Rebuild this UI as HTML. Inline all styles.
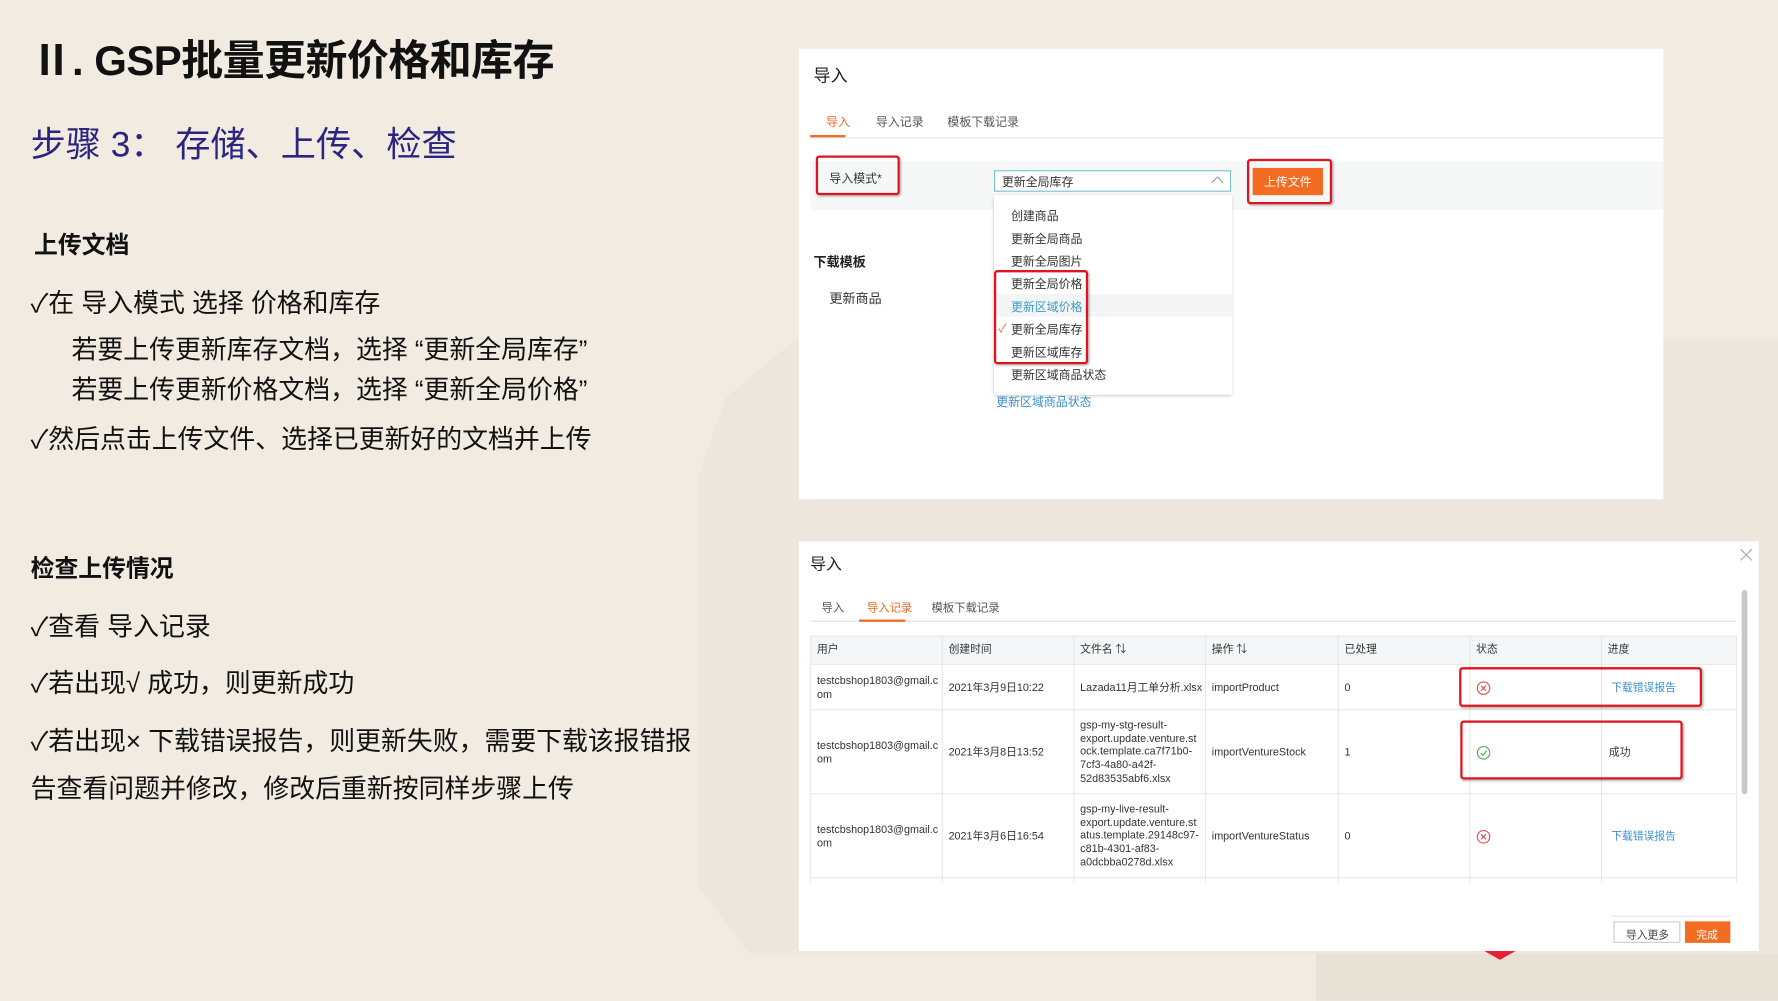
<!DOCTYPE html>
<html><head><meta charset="utf-8">
<style>
html,body{margin:0;padding:0;width:1778px;height:1000px;overflow:hidden;background:#f1ebe1}
#w{position:absolute;left:0;top:0;width:1567px;height:882px;transform:scale(1.13465);transform-origin:0 0;font-family:"Liberation Sans","Noto Sans CJK SC",sans-serif;color:#111}
.a{position:absolute;white-space:nowrap}
.t{font-size:22.8px;color:#111}
.p{background:#fff;position:absolute}
.s{font-size:10.5px;color:#333}
.rb{position:absolute;border:2.5px solid #e0141e;border-radius:3px;box-shadow:1px 1px 2px rgba(0,0,0,.3)}
.c{position:absolute;font-size:9.5px;color:#333;line-height:11.7px}
.vl{position:absolute;width:1px;background:#e8e8e8}
.hl{position:absolute;height:1px;background:#e8e8e8}
</style></head><body>
<div id="w">
<svg class="a" style="left:0;top:0" width="1567" height="882">
<polygon points="615,420 640,350 700,300 1567,300 1567,882 1160,882 1160,840 660,840 615,780" fill="#ede6dc"/>
<polygon points="1160,840 1567,840 1567,882 1160,882" fill="#e8e1d6"/>
<polygon points="1308,838 1336,838 1322,846" fill="#e8213a"/>
</svg>
<div class="a" style="left:27px;top:23px;font-size:37px;font-weight:bold;letter-spacing:-0.5px">Ⅱ. GSP批量更新价格和库存</div>
<div class="a" style="left:27px;top:102px;font-size:31px;color:#2b2580">步骤 3： 存储、上传、检查</div>
<div class="a" style="left:30px;top:200px;font-size:21px;font-weight:bold">上传文档</div>
<div class="a t" style="left:27px;top:249px">✓在 导入模式 选择 价格和库存</div>
<div class="a t" style="left:63px;top:290px">若要上传更新库存文档，选择 “更新全局库存”</div>
<div class="a t" style="left:63px;top:325px">若要上传更新价格文档，选择 “更新全局价格”</div>
<div class="a t" style="left:27px;top:369px">✓然后点击上传文件、选择已更新好的文档并上传</div>
<div class="a" style="left:27px;top:485px;font-size:21px;font-weight:bold">检查上传情况</div>
<div class="a t" style="left:27px;top:534px">✓查看 导入记录</div>
<div class="a t" style="left:27px;top:584px">✓若出现√ 成功，则更新成功</div>
<div class="a t" style="left:27px;top:635px">✓若出现× 下载错误报告，则更新失败，需要下载该报错报</div>
<div class="a t" style="left:27px;top:677px">告查看问题并修改，修改后重新按同样步骤上传</div>

<!-- panel 1 -->
<div class="p" style="left:704px;top:43px;width:762px;height:397px">
<div class="a" style="left:13px;top:13px;font-size:15px;color:#222">导入</div>
<div class="a s" style="left:24px;top:57px;color:#f06a24">导入</div>
<div class="a s" style="left:68px;top:57px;color:#555">导入记录</div>
<div class="a s" style="left:131px;top:57px;color:#555">模板下载记录</div>
<div class="hl" style="left:10px;top:78px;width:752px;background:#e4e4e4"></div>
<div class="a" style="left:10px;top:76px;width:31px;height:2px;background:#f06a24"></div>
<div class="a" style="left:10px;top:99px;width:752px;height:43px;background:#f6f8f8"></div>
<div class="a s" style="left:27px;top:107px">导入模式*</div>
<div class="a" style="left:172px;top:107px;width:207px;height:17px;border:1px solid #7cc0d4;background:#fff"><span class="a s" style="left:6px;top:2px">更新全局库存</span><svg class="a" style="left:190px;top:3px" width="12" height="8"><path d="M1 7 L6 2 L11 7" stroke="#999" fill="none"/></svg></div>
<div class="a" style="left:400px;top:105px;width:62px;height:24px;background:#f26c22"><span class="a" style="left:10px;top:5px;font-size:10.5px;color:#fff">上传文件</span></div>
<div class="a" style="left:172px;top:129px;width:210px;height:176px;background:#fff;box-shadow:0 1px 3px rgba(0,0,0,.25)"></div>
<div class="a" style="left:172px;top:216px;width:210px;height:20px;background:#f3f5f7"></div>
<div class="a s" style="left:187px;top:140px">创建商品</div>
<div class="a s" style="left:187px;top:160px">更新全局商品</div>
<div class="a s" style="left:187px;top:180px">更新全局图片</div>
<div class="a s" style="left:187px;top:200px">更新全局价格</div>
<div class="a s" style="left:187px;top:220px;color:#3a9fc4">更新区域价格</div>
<div class="a s" style="left:176px;top:239px;color:#f06a24">✓</div>
<div class="a s" style="left:187px;top:240px">更新全局库存</div>
<div class="a s" style="left:187px;top:260px">更新区域库存</div>
<div class="a s" style="left:187px;top:280px">更新区域商品状态</div>
<div class="a s" style="left:174px;top:304px;color:#3a8fd0">更新区域商品状态</div>
<div class="a" style="left:13px;top:180px;font-size:11.5px;font-weight:bold;color:#222">下载模板</div>
<div class="a" style="left:27px;top:212px;font-size:11.5px;color:#333">更新商品</div>
</div>
<div class="rb" style="left:719px;top:137px;width:70px;height:31px"></div>
<div class="rb" style="left:1099px;top:140px;width:71px;height:36px"></div>
<div class="rb" style="left:876px;top:238px;width:79px;height:79px"></div>

<!-- panel 2 -->
<div class="p" style="left:704px;top:477px;width:846px;height:361px">
<div class="a" style="left:10px;top:10px;font-size:14px;color:#222">导入</div>
<svg class="a" style="left:829px;top:6px" width="12" height="12"><path d="M1 1L11 11M11 1L1 11" stroke="#aaa" stroke-width="1"/></svg>
<div class="a" style="left:20px;top:50px;font-size:10px;color:#555">导入</div>
<div class="a" style="left:60px;top:50px;font-size:10px;color:#f06a24">导入记录</div>
<div class="a" style="left:117px;top:50px;font-size:10px;color:#555">模板下载记录</div>
<div class="hl" style="left:10px;top:70px;width:816px;background:#e2e2e2"></div>
<div class="a" style="left:53px;top:69px;width:41px;height:2px;background:#f06a24"></div>
<div class="a" style="left:831px;top:43px;width:5px;height:180px;background:#c8c8c8;border-radius:3px"></div>
<div class="a" style="left:10px;top:83px;width:816px;height:25px;background:#f5f6f7"></div>
<div class="hl" style="left:10px;top:83px;width:816px"></div>
<div class="hl" style="left:10px;top:108px;width:816px"></div>
<div class="hl" style="left:10px;top:148px;width:816px"></div>
<div class="hl" style="left:10px;top:222px;width:816px"></div>
<div class="hl" style="left:10px;top:296px;width:816px"></div>
<div class="vl" style="left:10px;top:83px;height:218px"></div>
<div class="vl" style="left:126px;top:83px;height:218px"></div>
<div class="vl" style="left:242px;top:83px;height:218px"></div>
<div class="vl" style="left:358px;top:83px;height:218px"></div>
<div class="vl" style="left:475px;top:83px;height:218px"></div>
<div class="vl" style="left:591px;top:83px;height:218px"></div>
<div class="vl" style="left:707px;top:83px;height:218px"></div>
<div class="vl" style="left:826px;top:83px;height:218px"></div>
<div class="c" style="left:16px;top:90px">用户</div>
<div class="c" style="left:132px;top:90px">创建时间</div>
<div class="c" style="left:248px;top:90px">文件名 ⇅</div>
<div class="c" style="left:364px;top:90px">操作 ⇅</div>
<div class="c" style="left:481px;top:90px">已处理</div>
<div class="c" style="left:597px;top:90px">状态</div>
<div class="c" style="left:713px;top:90px">进度</div>

<div class="c" style="left:16px;top:118px">testcbshop1803@gmail.c<br>om</div>
<div class="c" style="left:132px;top:124px">2021年3月9日10:22</div>
<div class="c" style="left:248px;top:124px">Lazada11月工单分析.xlsx</div>
<div class="c" style="left:364px;top:124px">importProduct</div>
<div class="c" style="left:481px;top:124px">0</div>
<svg class="a" style="left:597px;top:123px" width="13" height="13"><circle cx="6.5" cy="6.5" r="5.5" stroke="#e05050" fill="none"/><path d="M4.3 4.3L8.7 8.7M8.7 4.3L4.3 8.7" stroke="#e05050"/></svg>
<div class="c" style="left:716px;top:124px;color:#3a8fd0">下载错误报告</div>

<div class="c" style="left:16px;top:175px">testcbshop1803@gmail.c<br>om</div>
<div class="c" style="left:132px;top:181px">2021年3月8日13:52</div>
<div class="c" style="left:248px;top:157px">gsp-my-stg-result-<br>export.update.venture.st<br>ock.template.ca7f71b0-<br>7cf3-4a80-a42f-<br>52d83535abf6.xlsx</div>
<div class="c" style="left:364px;top:181px">importVentureStock</div>
<div class="c" style="left:481px;top:181px">1</div>
<svg class="a" style="left:597px;top:180px" width="13" height="13"><circle cx="6.5" cy="6.5" r="5.5" stroke="#4cb050" fill="none"/><path d="M4 6.8L6 8.8L9.3 4.5" stroke="#4cb050" fill="none"/></svg>
<div class="c" style="left:714px;top:181px">成功</div>

<div class="c" style="left:16px;top:249px">testcbshop1803@gmail.c<br>om</div>
<div class="c" style="left:132px;top:255px">2021年3月6日16:54</div>
<div class="c" style="left:248px;top:231px">gsp-my-live-result-<br>export.update.venture.st<br>atus.template.29148c97-<br>c81b-4301-af83-<br>a0dcbba0278d.xlsx</div>
<div class="c" style="left:364px;top:255px">importVentureStatus</div>
<div class="c" style="left:481px;top:255px">0</div>
<svg class="a" style="left:597px;top:254px" width="13" height="13"><circle cx="6.5" cy="6.5" r="5.5" stroke="#e05050" fill="none"/><path d="M4.3 4.3L8.7 8.7M8.7 4.3L4.3 8.7" stroke="#e05050"/></svg>
<div class="c" style="left:716px;top:255px;color:#3a8fd0">下载错误报告</div>
<div class="a" style="left:0;top:301px;width:846px;height:60px;background:#fff"></div>
<div class="hl" style="left:716px;top:330px;width:106px;background:#e6e6e6"></div>
<div class="a" style="left:718px;top:335px;width:57px;height:17px;border:1px solid #ccc;background:#fff"><span class="a" style="left:10px;top:3px;font-size:9.5px;color:#444">导入更多</span></div>
<div class="a" style="left:781px;top:335px;width:40px;height:19px;background:#f26c22"><span class="a" style="left:10px;top:4px;font-size:9.5px;color:#fff">完成</span></div>
</div>
<div class="rb" style="left:1286px;top:588px;width:210px;height:31px"></div>
<div class="rb" style="left:1287px;top:635px;width:192px;height:48px"></div>
</div>
</body></html>
